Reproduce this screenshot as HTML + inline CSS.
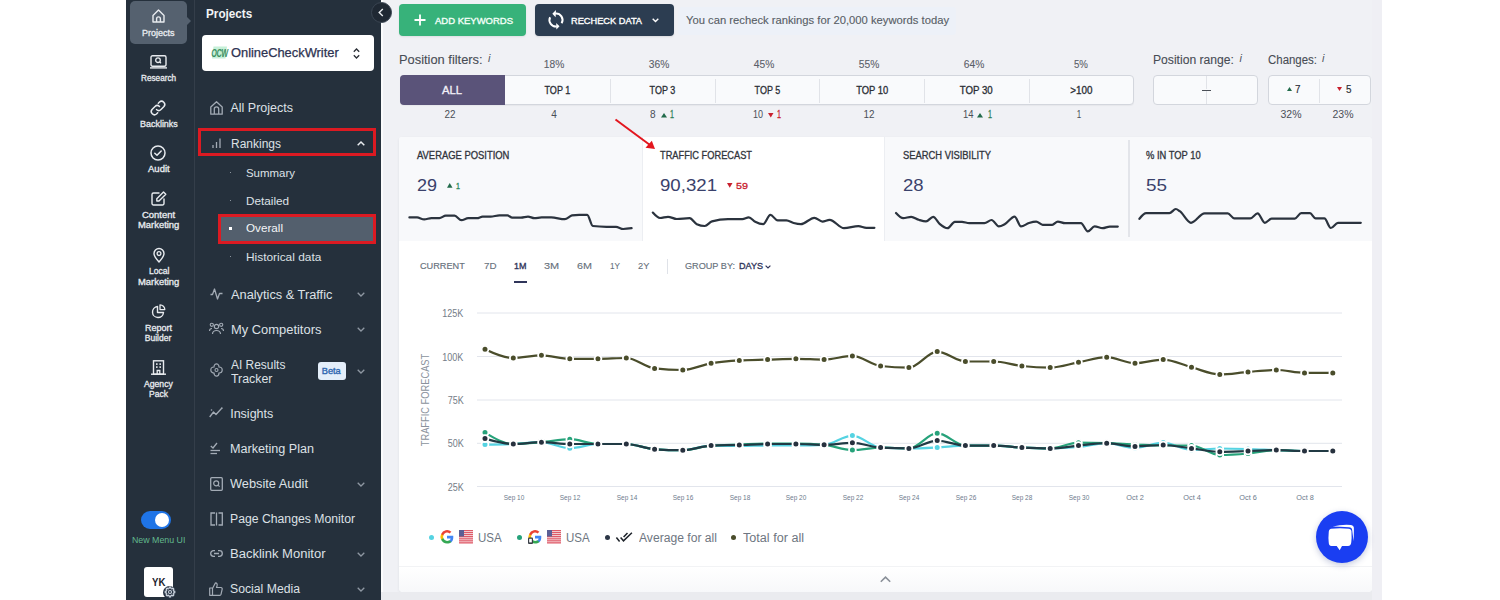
<!DOCTYPE html>
<html><head><meta charset="utf-8"><style>
html,body{margin:0;padding:0;width:1500px;height:600px;overflow:hidden;background:#fff;font-family:'Liberation Sans', sans-serif;}
#root{position:relative;width:1500px;height:600px;overflow:hidden;}
</style></head><body><div id="root">
<div style="position:absolute;left:126px;top:0px;width:255px;height:600px;background:#25303c;"></div>
<div style="position:absolute;left:194px;top:0px;width:1px;height:600px;background:#343e4a;"></div>
<div style="position:absolute;left:381px;top:0px;width:1001px;height:600px;background:#f0f1f5;"></div>
<div style="position:absolute;left:130px;top:1px;width:57px;height:43px;background:#55616f;border-radius:5px;"></div>
<div style="position:absolute;left:186px;top:16px;width:0;height:0;border-top:5px solid transparent;border-bottom:5px solid transparent;border-left:5px solid #55616f;"></div>
<svg style="position:absolute;left:152px;top:9px;overflow:visible" width="13" height="14" viewBox="0 0 13 14" fill="none"><path d="M1 6.5 L6.5 1 L12 6.5 V13 H1 Z" stroke="#e8ebef" stroke-width="1.4" stroke-linejoin="round"/><path d="M4.6 13 V9.8 a1.9 1.9 0 0 1 3.8 0 V13" stroke="#e8ebef" stroke-width="1.4"/></svg>
<div style="position:absolute;left:142.00px;top:28.67px;font-size:8.5px;line-height:8.5px;font-weight:400;color:#e8ebef;white-space:nowrap;letter-spacing:0px;transform:scaleX(1.0612);transform-origin:0 0;-webkit-text-stroke:0.3px #e8ebef;">Projects</div>
<svg style="position:absolute;left:150px;top:55px;overflow:visible" width="17" height="14" viewBox="0 0 17 14" fill="none"><rect x="1" y="0.7" width="15" height="10.6" rx="1.5" stroke="#e8ebef" stroke-width="1.4"/><line x1="0" y1="12.9" x2="17" y2="12.9" stroke="#e8ebef" stroke-width="1.4"/><circle cx="8" cy="5.2" r="2.3" stroke="#e8ebef" stroke-width="1.3"/><line x1="9.7" y1="6.9" x2="11" y2="8.2" stroke="#e8ebef" stroke-width="1.3"/></svg>
<div style="position:absolute;left:141.00px;top:74.08px;font-size:8.5px;line-height:8.5px;font-weight:400;color:#e8ebef;white-space:nowrap;letter-spacing:0px;transform:scaleX(0.9645);transform-origin:0 0;-webkit-text-stroke:0.3px #e8ebef;">Research</div>
<svg style="position:absolute;left:150px;top:100px;overflow:visible" width="16" height="16" viewBox="0 0 16 16" fill="none"><path d="M6.5 9.5 a3.2 3.2 0 0 0 4.5 0 l3 -3 a3.2 3.2 0 0 0 -4.5 -4.5 l-1.2 1.2" stroke="#e8ebef" stroke-width="1.5" stroke-linecap="round"/><path d="M9.5 6.5 a3.2 3.2 0 0 0 -4.5 0 l-3 3 a3.2 3.2 0 0 0 4.5 4.5 l1.2 -1.2" stroke="#e8ebef" stroke-width="1.5" stroke-linecap="round"/></svg>
<div style="position:absolute;left:139.50px;top:119.88px;font-size:8.5px;line-height:8.5px;font-weight:400;color:#e8ebef;white-space:nowrap;letter-spacing:0px;transform:scaleX(1.0527);transform-origin:0 0;-webkit-text-stroke:0.3px #e8ebef;">Backlinks</div>
<svg style="position:absolute;left:150px;top:145px;overflow:visible" width="16" height="16" viewBox="0 0 16 16" fill="none"><circle cx="8" cy="8" r="7" stroke="#e8ebef" stroke-width="1.5"/><path d="M4.8 8.2 L7 10.3 L11.2 6" stroke="#e8ebef" stroke-width="1.5" stroke-linecap="round" stroke-linejoin="round"/></svg>
<div style="position:absolute;left:147.50px;top:164.97px;font-size:8.5px;line-height:8.5px;font-weight:400;color:#e8ebef;white-space:nowrap;letter-spacing:0px;transform:scaleX(1.1200);transform-origin:0 0;-webkit-text-stroke:0.3px #e8ebef;">Audit</div>
<svg style="position:absolute;left:150.5px;top:191px;overflow:visible" width="16" height="15" viewBox="0 0 16 15" fill="none"><path d="M8 2 H2.5 a1.5 1.5 0 0 0 -1.5 1.5 V12.5 a1.5 1.5 0 0 0 1.5 1.5 H11.5 a1.5 1.5 0 0 0 1.5 -1.5 V8" stroke="#e8ebef" stroke-width="1.4" stroke-linecap="round"/><path d="M12.5 1 L14.8 3.3 L8 10 H5.8 V7.8 Z" stroke="#e8ebef" stroke-width="1.4" stroke-linejoin="round"/></svg>
<div style="position:absolute;left:142.10px;top:210.78px;font-size:8.5px;line-height:8.5px;font-weight:400;color:#e8ebef;white-space:nowrap;letter-spacing:0px;transform:scaleX(1.1114);transform-origin:0 0;-webkit-text-stroke:0.3px #e8ebef;">Content</div>
<div style="position:absolute;left:137.90px;top:221.28px;font-size:8.5px;line-height:8.5px;font-weight:400;color:#e8ebef;white-space:nowrap;letter-spacing:0px;transform:scaleX(1.1064);transform-origin:0 0;-webkit-text-stroke:0.3px #e8ebef;">Marketing</div>
<svg style="position:absolute;left:152.5px;top:248px;overflow:visible" width="12" height="15" viewBox="0 0 12 15" fill="none"><path d="M6 14 C2 9.5 1 7.5 1 5.5 a5 5 0 0 1 10 0 c0 2 -1 4 -5 8.5 Z" stroke="#e8ebef" stroke-width="1.4" stroke-linejoin="round"/><circle cx="6" cy="5.6" r="1.9" stroke="#e8ebef" stroke-width="1.3"/></svg>
<div style="position:absolute;left:148.50px;top:267.27px;font-size:8.5px;line-height:8.5px;font-weight:400;color:#e8ebef;white-space:nowrap;letter-spacing:0px;transform:scaleX(1.0085);transform-origin:0 0;-webkit-text-stroke:0.3px #e8ebef;">Local</div>
<div style="position:absolute;left:137.90px;top:277.77px;font-size:8.5px;line-height:8.5px;font-weight:400;color:#e8ebef;white-space:nowrap;letter-spacing:0px;transform:scaleX(1.1064);transform-origin:0 0;-webkit-text-stroke:0.3px #e8ebef;">Marketing</div>
<svg style="position:absolute;left:150.5px;top:304px;overflow:visible" width="15" height="14" viewBox="0 0 15 14" fill="none"><path d="M6.5 2.5 a5.5 5.5 0 1 0 6 6 H6.5 Z" stroke="#e8ebef" stroke-width="1.4" stroke-linejoin="round"/><path d="M9 0.8 a4.8 4.8 0 0 1 4.8 4.8 H9 Z" stroke="#e8ebef" stroke-width="1.3" stroke-linejoin="round"/></svg>
<div style="position:absolute;left:144.75px;top:323.57px;font-size:8.5px;line-height:8.5px;font-weight:400;color:#e8ebef;white-space:nowrap;letter-spacing:0px;transform:scaleX(1.0582);transform-origin:0 0;-webkit-text-stroke:0.3px #e8ebef;">Report</div>
<div style="position:absolute;left:144.75px;top:333.57px;font-size:8.5px;line-height:8.5px;font-weight:400;color:#e8ebef;white-space:nowrap;letter-spacing:0px;-webkit-text-stroke:0.3px #e8ebef;">Builder</div>
<svg style="position:absolute;left:151px;top:360px;overflow:visible" width="15" height="15" viewBox="0 0 15 15" fill="none"><rect x="2.5" y="0.8" width="10" height="13.4" stroke="#e8ebef" stroke-width="1.4"/><line x1="0" y1="14.2" x2="15" y2="14.2" stroke="#e8ebef" stroke-width="1.4"/><rect x="5" y="3.3" width="1.6" height="1.6" fill="#e8ebef"/><rect x="8.4" y="3.3" width="1.6" height="1.6" fill="#e8ebef"/><rect x="5" y="6.3" width="1.6" height="1.6" fill="#e8ebef"/><rect x="8.4" y="6.3" width="1.6" height="1.6" fill="#e8ebef"/><path d="M6.2 14 V10.5 H8.8 V14" stroke="#e8ebef" stroke-width="1.3"/></svg>
<div style="position:absolute;left:144.00px;top:380.07px;font-size:8.5px;line-height:8.5px;font-weight:400;color:#e8ebef;white-space:nowrap;letter-spacing:0px;transform:scaleX(1.0155);transform-origin:0 0;-webkit-text-stroke:0.3px #e8ebef;">Agency</div>
<div style="position:absolute;left:149.00px;top:389.57px;font-size:8.5px;line-height:8.5px;font-weight:400;color:#e8ebef;white-space:nowrap;letter-spacing:0px;-webkit-text-stroke:0.3px #e8ebef;">Pack</div>
<div style="position:absolute;left:141px;top:511px;width:30px;height:18px;background:#1f74e6;border-radius:9px;"></div>
<div style="position:absolute;left:155px;top:513px;width:14px;height:14px;border-radius:50%;background:#fff;"></div>
<div style="position:absolute;left:131.80px;top:536.46px;font-size:8.4px;line-height:8.4px;font-weight:400;color:#62b98e;white-space:nowrap;letter-spacing:0px;transform:scaleX(1.0525);transform-origin:0 0;">New Menu UI</div>
<div style="position:absolute;left:143.5px;top:566.5px;width:29.5px;height:30px;background:#fff;border-radius:3px;"></div>
<div style="position:absolute;left:151.80px;top:576.88px;font-size:10.5px;line-height:10.5px;font-weight:700;color:#1c232c;white-space:nowrap;letter-spacing:0px;transform:scaleX(0.9182);transform-origin:0 0;">YK</div>
<div style="position:absolute;left:163px;top:585.7px;width:13.4px;height:13.4px;border-radius:50%;background:#243040;"></div>
<svg style="position:absolute;left:162.7px;top:585.3px;overflow:visible" width="14" height="14" viewBox="0 0 14 14" fill="none"><path d="M11.83 6.17 L11.83 7.83 L10.61 7.82 L10.13 8.97 L11.00 9.83 L9.83 11.00 L8.97 10.13 L7.82 10.61 L7.83 11.83 L6.17 11.83 L6.18 10.61 L5.03 10.13 L4.17 11.00 L3.00 9.83 L3.87 8.97 L3.39 7.82 L2.17 7.83 L2.17 6.17 L3.39 6.18 L3.87 5.03 L3.00 4.17 L4.17 3.00 L5.03 3.87 L6.18 3.39 L6.17 2.17 L7.83 2.17 L7.82 3.39 L8.97 3.87 L9.83 3.00 L11.00 4.17 L10.13 5.03 L10.61 6.18 Z" stroke="#cdd5df" stroke-width="1.1" fill="none" stroke-linejoin="round"/><circle cx="7" cy="7" r="1.5" stroke="#cdd5df" stroke-width="1.1"/></svg>
<div style="position:absolute;left:205.70px;top:6.55px;font-size:13px;line-height:13px;font-weight:700;color:#f2f4f6;white-space:nowrap;letter-spacing:0px;transform:scaleX(0.9023);transform-origin:0 0;">Projects</div>
<div style="position:absolute;left:202px;top:35px;width:172px;height:35.5px;background:#fff;border-radius:4px;"></div>
<svg style="position:absolute;left:212px;top:46px;overflow:visible" width="15" height="13" viewBox="0 0 15 13" fill="none"><path d="M1.5 0.5 H15 L13.5 12.5 H0 Z" fill="#c6f0d8"/><g transform="translate(7.2 11.2) scale(0.62 1) skewX(-10)"><text x="0" y="0" font-family="Liberation Sans" font-weight="700" font-size="11.5" fill="#3c8f62" text-anchor="middle" letter-spacing="-0.6">OCW</text></g></svg>
<div style="position:absolute;left:231.30px;top:47.00px;font-size:12px;line-height:12px;font-weight:400;color:#2e3352;white-space:nowrap;letter-spacing:0px;transform:scaleX(1.0718);transform-origin:0 0;-webkit-text-stroke:0.25px #2e3352;">OnlineCheckWriter</div>
<svg style="position:absolute;left:353px;top:47.5px;overflow:visible" width="7" height="11" viewBox="0 0 7 11" fill="none"><path d="M0.8 3.8 L3.5 1 L6.2 3.8" stroke="#2b2f36" stroke-width="1.3" fill="none"/><path d="M0.8 7.2 L3.5 10 L6.2 7.2" stroke="#2b2f36" stroke-width="1.3" fill="none"/></svg>
<svg style="position:absolute;left:209.5px;top:100.5px;overflow:visible" width="13" height="14" viewBox="0 0 13 14" fill="none"><path d="M0.8 6 L6.5 0.8 L12.2 6 V13.2 H0.8 Z" stroke="#a3abb5" stroke-width="1.3" stroke-linejoin="round"/><path d="M4.3 13 V8 a2.2 2.2 0 0 1 4.4 0 V13" stroke="#a3abb5" stroke-width="1.3"/></svg>
<div style="position:absolute;left:230.50px;top:101.58px;font-size:12.5px;line-height:12.5px;font-weight:400;color:#dde1e6;white-space:nowrap;letter-spacing:0px;">All Projects</div>
<div style="position:absolute;left:197.5px;top:128px;width:178.5px;height:28px;box-sizing:border-box;border:3px solid #dc1a22;"></div>
<svg style="position:absolute;left:211.5px;top:137.5px;overflow:visible" width="9" height="10" viewBox="0 0 9 10" fill="none"><line x1="1" y1="7" x2="1" y2="10" stroke="#a3abb5" stroke-width="1.3"/><line x1="4.5" y1="4" x2="4.5" y2="10" stroke="#a3abb5" stroke-width="1.3"/><line x1="8" y1="0.5" x2="8" y2="10" stroke="#a3abb5" stroke-width="1.3"/></svg>
<div style="position:absolute;left:230.50px;top:137.68px;font-size:12.5px;line-height:12.5px;font-weight:400;color:#dde1e6;white-space:nowrap;letter-spacing:0px;transform:scaleX(0.9592);transform-origin:0 0;">Rankings</div>
<svg style="position:absolute;left:356.5px;top:140.5px;overflow:visible" width="8" height="5" viewBox="0 0 8 5" fill="none"><path d="M0.7 4.3 L4 1 L7.3 4.3" stroke="#e8ebef" stroke-width="1.5" fill="none"/></svg>
<div style="position:absolute;left:230px;top:172.0px;width:1.3px;height:1.3px;background:#8b949e;"></div>
<div style="position:absolute;left:245.80px;top:167.92px;font-size:11.5px;line-height:11.5px;font-weight:400;color:#dde1e6;white-space:nowrap;letter-spacing:0px;transform:scaleX(0.9938);transform-origin:0 0;">Summary</div>
<div style="position:absolute;left:230px;top:199.8px;width:1.3px;height:1.3px;background:#8b949e;"></div>
<div style="position:absolute;left:245.80px;top:195.72px;font-size:11.5px;line-height:11.5px;font-weight:400;color:#dde1e6;white-space:nowrap;letter-spacing:0px;transform:scaleX(1.0213);transform-origin:0 0;">Detailed</div>
<div style="position:absolute;left:230px;top:256.0px;width:1.3px;height:1.3px;background:#8b949e;"></div>
<div style="position:absolute;left:245.80px;top:251.92px;font-size:11.5px;line-height:11.5px;font-weight:400;color:#dde1e6;white-space:nowrap;letter-spacing:0px;transform:scaleX(1.0333);transform-origin:0 0;">Historical data</div>
<div style="position:absolute;left:218px;top:214.3px;width:158px;height:30.2px;box-sizing:border-box;border:3.5px solid #dc1a22;background:#535f6d;"></div>
<div style="position:absolute;left:229px;top:227px;width:3.2px;height:3.2px;background:#fff;"></div>
<div style="position:absolute;left:245.80px;top:223.42px;font-size:11.5px;line-height:11.5px;font-weight:400;color:#f4f6f8;white-space:nowrap;letter-spacing:0px;transform:scaleX(1.0154);transform-origin:0 0;">Overall</div>
<svg style="position:absolute;left:209.5px;top:288px;overflow:visible" width="13" height="12" viewBox="0 0 13 12" fill="none"><path d="M0.5 6.5 H2.5 L4.5 1 L7.5 11 L9.5 5.5 H12.5" stroke="#a3abb5" stroke-width="1.3" fill="none" stroke-linejoin="round"/></svg>
<div style="position:absolute;left:230.60px;top:288.88px;font-size:12.5px;line-height:12.5px;font-weight:400;color:#dde1e6;white-space:nowrap;letter-spacing:0px;transform:scaleX(1.0231);transform-origin:0 0;">Analytics &amp; Traffic</div>
<svg style="position:absolute;left:356.5px;top:292px;overflow:visible" width="8" height="5" viewBox="0 0 8 5" fill="none"><path d="M0.7 0.7 L4 4 L7.3 0.7" stroke="#8e97a2" stroke-width="1.3" fill="none"/></svg>
<svg style="position:absolute;left:209px;top:322px;overflow:visible" width="15" height="13" viewBox="0 0 15 13" fill="none"><circle cx="7.5" cy="4.5" r="2.2" stroke="#a3abb5" stroke-width="1.2"/><path d="M3.5 12 a4 3.5 0 0 1 8 0" stroke="#a3abb5" stroke-width="1.2"/><circle cx="2.8" cy="2.8" r="1.6" stroke="#a3abb5" stroke-width="1.1"/><circle cx="12.2" cy="2.8" r="1.6" stroke="#a3abb5" stroke-width="1.1"/><path d="M0.5 9 a2.5 2.5 0 0 1 2.5 -2.5" stroke="#a3abb5" stroke-width="1.1"/><path d="M14.5 9 a2.5 2.5 0 0 0 -2.5 -2.5" stroke="#a3abb5" stroke-width="1.1"/></svg>
<div style="position:absolute;left:230.60px;top:324.38px;font-size:12.5px;line-height:12.5px;font-weight:400;color:#dde1e6;white-space:nowrap;letter-spacing:0px;transform:scaleX(1.0328);transform-origin:0 0;">My Competitors</div>
<svg style="position:absolute;left:356.5px;top:327px;overflow:visible" width="8" height="5" viewBox="0 0 8 5" fill="none"><path d="M0.7 0.7 L4 4 L7.3 0.7" stroke="#8e97a2" stroke-width="1.3" fill="none"/></svg>
<svg style="position:absolute;left:209.5px;top:363px;overflow:visible" width="13" height="14" viewBox="0 0 13 14" fill="none"><path d="M6.5 0.8 C9 0.8 9 4 9 4 C9 4 12.2 4 12.2 7 C12.2 10 9 10 9 10 C9 10 9 13.2 6.5 13.2 C4 13.2 4 10 4 10 C4 10 0.8 10 0.8 7 C0.8 4 4 4 4 4 C4 4 4 0.8 6.5 0.8 Z" stroke="#a3abb5" stroke-width="1.2"/><circle cx="6.5" cy="7" r="1.5" stroke="#a3abb5" stroke-width="1.1"/></svg>
<div style="position:absolute;left:230.60px;top:359.07px;font-size:12.5px;line-height:12.5px;font-weight:400;color:#dde1e6;white-space:nowrap;letter-spacing:0px;transform:scaleX(0.9549);transform-origin:0 0;">AI Results</div>
<div style="position:absolute;left:230.60px;top:372.98px;font-size:12.5px;line-height:12.5px;font-weight:400;color:#dde1e6;white-space:nowrap;letter-spacing:0px;transform:scaleX(0.9879);transform-origin:0 0;">Tracker</div>
<div style="position:absolute;left:317.5px;top:362px;width:28.5px;height:17.5px;background:#e4eefa;border-radius:3px;"></div>
<div style="position:absolute;left:322.49px;top:366.85px;font-size:9px;line-height:9px;font-weight:400;color:#2e67b1;white-space:nowrap;letter-spacing:0px;transform:scaleX(1.0262);transform-origin:50% 0;-webkit-text-stroke:0.35px #2e67b1;">Beta</div>
<svg style="position:absolute;left:356.5px;top:369px;overflow:visible" width="8" height="5" viewBox="0 0 8 5" fill="none"><path d="M0.7 0.7 L4 4 L7.3 0.7" stroke="#8e97a2" stroke-width="1.3" fill="none"/></svg>
<svg style="position:absolute;left:209px;top:407px;overflow:visible" width="14" height="11" viewBox="0 0 14 11" fill="none"><path d="M0.7 10 L4.5 5 L7 7.5 L12.5 1.5" stroke="#a3abb5" stroke-width="1.3" fill="none" stroke-linejoin="round"/><circle cx="12.8" cy="1.2" r="0.9" fill="#a3abb5"/><circle cx="2.5" cy="3" r="0.8" fill="#a3abb5"/></svg>
<div style="position:absolute;left:230.20px;top:407.98px;font-size:12.5px;line-height:12.5px;font-weight:400;color:#dde1e6;white-space:nowrap;letter-spacing:0px;">Insights</div>
<svg style="position:absolute;left:210px;top:441px;overflow:visible" width="11" height="14" viewBox="0 0 11 14" fill="none"><path d="M0.8 5 L3 7 L7 2" stroke="#a3abb5" stroke-width="1.3" fill="none"/><line x1="0.5" y1="9.5" x2="10" y2="9.5" stroke="#a3abb5" stroke-width="1.3"/><line x1="0.5" y1="12.5" x2="7" y2="12.5" stroke="#a3abb5" stroke-width="1.3"/></svg>
<div style="position:absolute;left:230.20px;top:442.68px;font-size:12.5px;line-height:12.5px;font-weight:400;color:#dde1e6;white-space:nowrap;letter-spacing:0px;transform:scaleX(1.0075);transform-origin:0 0;">Marketing Plan</div>
<svg style="position:absolute;left:209.5px;top:477px;overflow:visible" width="13" height="14" viewBox="0 0 13 14" fill="none"><rect x="0.7" y="0.7" width="11.6" height="12.6" rx="1" stroke="#a3abb5" stroke-width="1.3"/><circle cx="6.2" cy="6.3" r="2.5" stroke="#a3abb5" stroke-width="1.2"/><line x1="8" y1="8.1" x2="9.6" y2="9.7" stroke="#a3abb5" stroke-width="1.2"/></svg>
<div style="position:absolute;left:230.20px;top:477.57px;font-size:12.5px;line-height:12.5px;font-weight:400;color:#dde1e6;white-space:nowrap;letter-spacing:0px;transform:scaleX(1.0236);transform-origin:0 0;">Website Audit</div>
<svg style="position:absolute;left:356.5px;top:481.5px;overflow:visible" width="8" height="5" viewBox="0 0 8 5" fill="none"><path d="M0.7 0.7 L4 4 L7.3 0.7" stroke="#8e97a2" stroke-width="1.3" fill="none"/></svg>
<svg style="position:absolute;left:209.5px;top:512px;overflow:visible" width="13" height="14" viewBox="0 0 13 14" fill="none"><path d="M6.5 0.5 V13.5" stroke="#a3abb5" stroke-width="1.3"/><path d="M5 1 H1 V13 H5" stroke="#a3abb5" stroke-width="1.3" fill="none"/><path d="M8.5 1 H12.3 V13 H8.5" stroke="#a3abb5" stroke-width="1.3" fill="none"/></svg>
<div style="position:absolute;left:230.30px;top:513.17px;font-size:12.5px;line-height:12.5px;font-weight:400;color:#dde1e6;white-space:nowrap;letter-spacing:0px;transform:scaleX(0.9776);transform-origin:0 0;">Page Changes Monitor</div>
<svg style="position:absolute;left:209.5px;top:550px;overflow:visible" width="13" height="7" viewBox="0 0 13 7" fill="none"><path d="M5 0.7 H3.5 a2.8 2.8 0 0 0 0 5.6 H5 M8 0.7 H9.5 a2.8 2.8 0 0 1 0 5.6 H8 M4 3.5 H9" stroke="#a3abb5" stroke-width="1.3" fill="none"/></svg>
<div style="position:absolute;left:230.30px;top:548.17px;font-size:12.5px;line-height:12.5px;font-weight:400;color:#dde1e6;white-space:nowrap;letter-spacing:0px;transform:scaleX(1.0414);transform-origin:0 0;">Backlink Monitor</div>
<svg style="position:absolute;left:356.5px;top:551.5px;overflow:visible" width="8" height="5" viewBox="0 0 8 5" fill="none"><path d="M0.7 0.7 L4 4 L7.3 0.7" stroke="#8e97a2" stroke-width="1.3" fill="none"/></svg>
<svg style="position:absolute;left:209px;top:582px;overflow:visible" width="14" height="14" viewBox="0 0 14 14" fill="none"><path d="M0.7 6 H3.5 V13.3 H0.7 Z M3.5 6.5 L6.5 0.8 C8 0.8 8.5 2 8 4 L7.5 5.5 H12 a1.3 1.3 0 0 1 1.2 1.6 L12 12.3 a1.3 1.3 0 0 1 -1.3 1 H3.5" stroke="#a3abb5" stroke-width="1.2" fill="none" stroke-linejoin="round"/></svg>
<div style="position:absolute;left:230.30px;top:583.17px;font-size:12.5px;line-height:12.5px;font-weight:400;color:#dde1e6;white-space:nowrap;letter-spacing:0px;transform:scaleX(0.9780);transform-origin:0 0;">Social Media</div>
<svg style="position:absolute;left:356.5px;top:586.5px;overflow:visible" width="8" height="5" viewBox="0 0 8 5" fill="none"><path d="M0.7 0.7 L4 4 L7.3 0.7" stroke="#8e97a2" stroke-width="1.3" fill="none"/></svg>
<div style="position:absolute;left:381px;top:0px;width:1.5px;height:600px;background:#fafbfc;"></div>
<div style="position:absolute;left:399px;top:4px;width:127px;height:32px;background:#37b27a;border-radius:4px;box-shadow:0 1px 2px rgba(0,0,0,0.08);"></div>
<svg style="position:absolute;left:414px;top:14px;overflow:visible" width="12" height="12" viewBox="0 0 12 12" fill="none"><path d="M6 0.5 V11.5 M0.5 6 H11.5" stroke="#fff" stroke-width="1.8"/></svg>
<div style="position:absolute;left:435.00px;top:16.01px;font-size:9.4px;line-height:9.4px;font-weight:400;color:#f4fff8;white-space:nowrap;letter-spacing:0px;transform:scaleX(1.0118);transform-origin:0 0;-webkit-text-stroke:0.35px #f4fff8;">ADD KEYWORDS</div>
<div style="position:absolute;left:535px;top:4px;width:139px;height:32px;background:#2c3d51;border-radius:4px;box-shadow:0 1px 2px rgba(0,0,0,0.1);"></div>
<svg style="position:absolute;left:548px;top:9px;overflow:visible" width="16" height="21" viewBox="0 0 16 21" fill="none"><path d="M7.2 4.5 A6.5 6.5 0 0 1 13.6 14.25" stroke="#fff" stroke-width="2" fill="none"/><path d="M4.3 4.7 L8 1 L7.6 8.3 Z" fill="#fff"/><path d="M2.1 8.25 A6.5 6.5 0 0 0 8.8 17.5" stroke="#fff" stroke-width="2" fill="none"/><path d="M11.5 17.3 L8.2 14 L8.4 20.5 Z" fill="#fff"/></svg>
<div style="position:absolute;left:571.00px;top:16.01px;font-size:9.4px;line-height:9.4px;font-weight:400;color:#fff;white-space:nowrap;letter-spacing:0px;transform:scaleX(0.9853);transform-origin:0 0;-webkit-text-stroke:0.35px #fff;">RECHECK DATA</div>
<svg style="position:absolute;left:651.5px;top:18px;overflow:visible" width="7" height="5" viewBox="0 0 7 5" fill="none"><path d="M0.7 0.7 L3.5 3.5 L6.3 0.7" stroke="#fff" stroke-width="1.4" fill="none"/></svg>
<div style="position:absolute;left:678px;top:7px;width:278px;height:28px;background:#edf1f8;border-radius:3px;"></div>
<div style="position:absolute;left:686.00px;top:15.45px;font-size:11px;line-height:11px;font-weight:400;color:#585e66;white-space:nowrap;letter-spacing:0px;transform:scaleX(1.0208);transform-origin:0 0;-webkit-text-stroke:0.12px #585e66;">You can recheck rankings for 20,000 keywords today</div>
<div style="position:absolute;left:399.40px;top:53.88px;font-size:12.5px;line-height:12.5px;font-weight:400;color:#474c54;white-space:nowrap;letter-spacing:0px;transform:scaleX(1.0285);transform-origin:0 0;-webkit-text-stroke:0.1px #474c54;">Position filters:</div>
<div style="position:absolute;left:488.00px;top:53.15px;font-size:11px;line-height:11px;font-weight:400;color:#50555d;white-space:nowrap;letter-spacing:0px;font-style:italic;">i</div>
<div style="position:absolute;left:400px;top:74.5px;width:734px;height:30px;background:#f9fafc;border:1px solid #d3d6dd;border-radius:4px;box-sizing:border-box;box-shadow:0 1px 1px rgba(0,0,0,0.04);"></div>
<div style="position:absolute;left:400px;top:74.5px;width:105px;height:30px;background:#5a5379;border-radius:4px 0 0 4px;"></div>
<div style="position:absolute;left:609.72px;top:79px;width:1px;height:24px;background:#e1e3e8;"></div>
<div style="position:absolute;left:714.5799999999999px;top:79px;width:1px;height:24px;background:#e1e3e8;"></div>
<div style="position:absolute;left:819.44px;top:79px;width:1px;height:24px;background:#e1e3e8;"></div>
<div style="position:absolute;left:924.3px;top:79px;width:1px;height:24px;background:#e1e3e8;"></div>
<div style="position:absolute;left:1029.1599999999999px;top:79px;width:1px;height:24px;background:#e1e3e8;"></div>
<div style="position:absolute;left:443.42px;top:85.92px;font-size:10.1px;line-height:10.1px;font-weight:400;color:#f2f0f8;white-space:nowrap;letter-spacing:0px;transform:scaleX(1.1130);transform-origin:50% 0;-webkit-text-stroke:0.3px #f2f0f8;">ALL</div>
<div style="position:absolute;left:542.85px;top:85.92px;font-size:10.1px;line-height:10.1px;font-weight:400;color:#2a2e35;white-space:nowrap;letter-spacing:0px;transform:scaleX(0.8954);transform-origin:50% 0;-webkit-text-stroke:0.3px #2a2e35;">TOP 1</div>
<div style="position:absolute;left:543.24px;top:59.05px;font-size:11px;line-height:11px;font-weight:400;color:#5a6069;white-space:nowrap;letter-spacing:0px;transform:scaleX(0.9305);transform-origin:50% 0;-webkit-text-stroke:0.1px #5a6069;">18%</div>
<div style="position:absolute;left:647.71px;top:85.92px;font-size:10.1px;line-height:10.1px;font-weight:400;color:#2a2e35;white-space:nowrap;letter-spacing:0px;transform:scaleX(0.8885);transform-origin:50% 0;-webkit-text-stroke:0.3px #2a2e35;">TOP 3</div>
<div style="position:absolute;left:648.10px;top:59.05px;font-size:11px;line-height:11px;font-weight:400;color:#5a6069;white-space:nowrap;letter-spacing:0px;transform:scaleX(0.9305);transform-origin:50% 0;-webkit-text-stroke:0.1px #5a6069;">36%</div>
<div style="position:absolute;left:752.57px;top:85.92px;font-size:10.1px;line-height:10.1px;font-weight:400;color:#2a2e35;white-space:nowrap;letter-spacing:0px;transform:scaleX(0.8885);transform-origin:50% 0;-webkit-text-stroke:0.3px #2a2e35;">TOP 5</div>
<div style="position:absolute;left:752.96px;top:59.05px;font-size:11px;line-height:11px;font-weight:400;color:#5a6069;white-space:nowrap;letter-spacing:0px;transform:scaleX(0.9305);transform-origin:50% 0;-webkit-text-stroke:0.1px #5a6069;">45%</div>
<div style="position:absolute;left:854.63px;top:85.92px;font-size:10.1px;line-height:10.1px;font-weight:400;color:#2a2e35;white-space:nowrap;letter-spacing:0px;transform:scaleX(0.9296);transform-origin:50% 0;-webkit-text-stroke:0.3px #2a2e35;">TOP 10</div>
<div style="position:absolute;left:857.82px;top:59.05px;font-size:11px;line-height:11px;font-weight:400;color:#5a6069;white-space:nowrap;letter-spacing:0px;transform:scaleX(0.9305);transform-origin:50% 0;-webkit-text-stroke:0.1px #5a6069;">55%</div>
<div style="position:absolute;left:959.49px;top:85.92px;font-size:10.1px;line-height:10.1px;font-weight:400;color:#2a2e35;white-space:nowrap;letter-spacing:0px;transform:scaleX(0.9587);transform-origin:50% 0;-webkit-text-stroke:0.3px #2a2e35;">TOP 30</div>
<div style="position:absolute;left:962.68px;top:59.05px;font-size:11px;line-height:11px;font-weight:400;color:#5a6069;white-space:nowrap;letter-spacing:0px;transform:scaleX(0.9305);transform-origin:50% 0;-webkit-text-stroke:0.1px #5a6069;">64%</div>
<div style="position:absolute;left:1070.18px;top:85.92px;font-size:10.1px;line-height:10.1px;font-weight:400;color:#2a2e35;white-space:nowrap;letter-spacing:0px;transform:scaleX(0.9758);transform-origin:50% 0;-webkit-text-stroke:0.3px #2a2e35;">&gt;100</div>
<div style="position:absolute;left:1072.61px;top:59.05px;font-size:11px;line-height:11px;font-weight:400;color:#5a6069;white-space:nowrap;letter-spacing:0px;transform:scaleX(0.8802);transform-origin:50% 0;-webkit-text-stroke:0.1px #5a6069;">5%</div>
<div style="position:absolute;left:443.79px;top:109.32px;font-size:10.8px;line-height:10.8px;font-weight:400;color:#4a4f57;white-space:nowrap;letter-spacing:0px;transform:scaleX(0.9155);transform-origin:50% 0;">22</div>
<div style="position:absolute;left:550.99px;top:109.32px;font-size:10.8px;line-height:10.8px;font-weight:400;color:#4a4f57;white-space:nowrap;letter-spacing:0px;transform:scaleX(0.9309);transform-origin:50% 0;">4</div>
<div style="position:absolute;left:650.00px;top:109.32px;font-size:10.8px;line-height:10.8px;font-weight:400;color:#4a4f57;white-space:nowrap;letter-spacing:0px;transform:scaleX(0.9309);transform-origin:0 0;">8</div>
<svg style="position:absolute;left:660.5px;top:112.8px;overflow:visible" width="6" height="4.5" viewBox="0 0 6 4.5" fill="none"><path d="M0 4.5 L3 0 L6 4.5 Z" fill="#226b4b"/></svg>
<div style="position:absolute;left:669.80px;top:109.32px;font-size:10.8px;line-height:10.8px;font-weight:400;color:#2f7d57;white-space:nowrap;letter-spacing:0px;transform:scaleX(0.6649);transform-origin:0 0;-webkit-text-stroke:0.3px #2f7d57;">1</div>
<div style="position:absolute;left:753.00px;top:109.32px;font-size:10.8px;line-height:10.8px;font-weight:400;color:#4a4f57;white-space:nowrap;letter-spacing:0px;transform:scaleX(0.8322);transform-origin:0 0;">10</div>
<svg style="position:absolute;left:768px;top:112.8px;overflow:visible" width="5.5" height="4.5" viewBox="0 0 5.5 4.5" fill="none"><path d="M0 0 L5.5 0 L2.75 4.5 Z" fill="#c8202e"/></svg>
<div style="position:absolute;left:777.00px;top:109.32px;font-size:10.8px;line-height:10.8px;font-weight:400;color:#c8202e;white-space:nowrap;letter-spacing:0px;transform:scaleX(0.6649);transform-origin:0 0;-webkit-text-stroke:0.3px #c8202e;">1</div>
<div style="position:absolute;left:863.29px;top:109.32px;font-size:10.8px;line-height:10.8px;font-weight:400;color:#4a4f57;white-space:nowrap;letter-spacing:0px;transform:scaleX(0.9155);transform-origin:50% 0;">12</div>
<div style="position:absolute;left:962.70px;top:109.32px;font-size:10.8px;line-height:10.8px;font-weight:400;color:#4a4f57;white-space:nowrap;letter-spacing:0px;transform:scaleX(0.8739);transform-origin:0 0;">14</div>
<svg style="position:absolute;left:977px;top:112.8px;overflow:visible" width="6" height="4.5" viewBox="0 0 6 4.5" fill="none"><path d="M0 4.5 L3 0 L6 4.5 Z" fill="#226b4b"/></svg>
<div style="position:absolute;left:987.50px;top:109.32px;font-size:10.8px;line-height:10.8px;font-weight:400;color:#2f7d57;white-space:nowrap;letter-spacing:0px;transform:scaleX(0.6649);transform-origin:0 0;-webkit-text-stroke:0.3px #2f7d57;">1</div>
<div style="position:absolute;left:1076.49px;top:109.32px;font-size:10.8px;line-height:10.8px;font-weight:400;color:#4a4f57;white-space:nowrap;letter-spacing:0px;transform:scaleX(0.7481);transform-origin:50% 0;">1</div>
<div style="position:absolute;left:1153.00px;top:53.88px;font-size:12.5px;line-height:12.5px;font-weight:400;color:#474c54;white-space:nowrap;letter-spacing:0px;transform:scaleX(0.9713);transform-origin:0 0;-webkit-text-stroke:0.1px #474c54;">Position range:</div>
<div style="position:absolute;left:1239.50px;top:53.15px;font-size:11px;line-height:11px;font-weight:400;color:#50555d;white-space:nowrap;letter-spacing:0px;font-style:italic;">i</div>
<div style="position:absolute;left:1153px;top:74.5px;width:105px;height:30px;background:#f9fafc;border:1px solid #d3d6dd;border-radius:4px;box-sizing:border-box;"></div>
<div style="position:absolute;left:1205.5px;top:75.5px;width:1px;height:28px;background:#e1e3e8;"></div>
<div style="position:absolute;left:1201px;top:88.8px;width:9.5px;height:2.5px;background:#f9fafc;"></div>
<div style="position:absolute;left:1201.5px;top:89.5px;width:9px;height:1.2px;background:#4a4f57;"></div>
<div style="position:absolute;left:1268.00px;top:53.88px;font-size:12.5px;line-height:12.5px;font-weight:400;color:#474c54;white-space:nowrap;letter-spacing:0px;transform:scaleX(0.9156);transform-origin:0 0;-webkit-text-stroke:0.1px #474c54;">Changes:</div>
<div style="position:absolute;left:1322.00px;top:53.15px;font-size:11px;line-height:11px;font-weight:400;color:#50555d;white-space:nowrap;letter-spacing:0px;font-style:italic;">i</div>
<div style="position:absolute;left:1268px;top:74.5px;width:103px;height:30px;background:#f9fafc;border:1px solid #d3d6dd;border-radius:4px;box-sizing:border-box;"></div>
<div style="position:absolute;left:1319px;top:78.5px;width:1px;height:24px;background:#e1e3e8;"></div>
<svg style="position:absolute;left:1286.5px;top:87px;overflow:visible" width="5" height="4" viewBox="0 0 5 4" fill="none"><path d="M0 4 L2.5 0 L5 4 Z" fill="#226b4b"/></svg>
<div style="position:absolute;left:1295.00px;top:85.00px;font-size:10px;line-height:10px;font-weight:400;color:#2a2e35;white-space:nowrap;letter-spacing:0px;transform:scaleX(0.9888);transform-origin:0 0;-webkit-text-stroke:0.15px #2a2e35;">7</div>
<svg style="position:absolute;left:1337px;top:87px;overflow:visible" width="5" height="4" viewBox="0 0 5 4" fill="none"><path d="M0 0 L5 0 L2.5 4 Z" fill="#c8202e"/></svg>
<div style="position:absolute;left:1346.00px;top:85.00px;font-size:10px;line-height:10px;font-weight:400;color:#2a2e35;white-space:nowrap;letter-spacing:0px;transform:scaleX(0.9888);transform-origin:0 0;-webkit-text-stroke:0.15px #2a2e35;">5</div>
<div style="position:absolute;left:1280.99px;top:109.90px;font-size:10px;line-height:10px;font-weight:400;color:#4a4f57;white-space:nowrap;letter-spacing:0px;transform:scaleX(1.0492);transform-origin:50% 0;">32%</div>
<div style="position:absolute;left:1332.99px;top:109.90px;font-size:10px;line-height:10px;font-weight:400;color:#4a4f57;white-space:nowrap;letter-spacing:0px;transform:scaleX(1.0492);transform-origin:50% 0;">23%</div>
<div style="position:absolute;left:399px;top:137px;width:972.5px;height:455px;background:#fff;border-radius:4px;box-shadow:0 1px 3px rgba(30,40,60,0.08);"></div>
<div style="position:absolute;left:399px;top:137px;width:242.5px;height:103.5px;background:#f8f9fb;border-radius:2px 0 0 0;"></div>
<div style="position:absolute;left:641.5px;top:137px;width:1px;height:103.5px;background:#eceef2;"></div>
<div style="position:absolute;left:884.5px;top:137px;width:243.5px;height:103.5px;background:#f8f9fb;"></div>
<div style="position:absolute;left:884px;top:137px;width:1px;height:103.5px;background:#eceef2;"></div>
<div style="position:absolute;left:1128px;top:137px;width:243.5px;height:103.5px;background:#f8f9fb;border-radius:0 4px 0 0;"></div>
<div style="position:absolute;left:1128px;top:140px;width:1.5px;height:97px;background:#e3e5ea;"></div>
<div style="position:absolute;left:417.00px;top:150.70px;font-size:10px;line-height:10px;font-weight:400;color:#30343b;white-space:nowrap;letter-spacing:0px;transform:scaleX(0.9412);transform-origin:0 0;-webkit-text-stroke:0.3px #30343b;">AVERAGE POSITION</div>
<div style="position:absolute;left:417.00px;top:176.97px;font-size:16.5px;line-height:16.5px;font-weight:400;color:#3a416b;white-space:nowrap;letter-spacing:0px;transform:scaleX(1.0894);transform-origin:0 0;">29</div>
<svg style="position:absolute;left:447px;top:183.3px;overflow:visible" width="5.5" height="4.7" viewBox="0 0 5.5 4.7" fill="none"><path d="M0 4.7 L2.75 0 L5.5 4.7 Z" fill="#226b4b"/></svg>
<div style="position:absolute;left:456.30px;top:181.14px;font-size:9.6px;line-height:9.6px;font-weight:400;color:#2f8a5b;white-space:nowrap;letter-spacing:0px;transform:scaleX(0.7485);transform-origin:0 0;-webkit-text-stroke:0.35px #2f8a5b;">1</div>
<div style="position:absolute;left:660.00px;top:150.70px;font-size:10px;line-height:10px;font-weight:400;color:#30343b;white-space:nowrap;letter-spacing:0px;transform:scaleX(0.9251);transform-origin:0 0;-webkit-text-stroke:0.3px #30343b;">TRAFFIC FORECAST</div>
<div style="position:absolute;left:660.00px;top:176.97px;font-size:16.5px;line-height:16.5px;font-weight:400;color:#3a416b;white-space:nowrap;letter-spacing:0px;transform:scaleX(1.1294);transform-origin:0 0;">90,321</div>
<svg style="position:absolute;left:727px;top:183.3px;overflow:visible" width="5.5" height="4.7" viewBox="0 0 5.5 4.7" fill="none"><path d="M0 0 L5.5 0 L2.75 4.7 Z" fill="#c8202e"/></svg>
<div style="position:absolute;left:735.60px;top:180.97px;font-size:9.8px;line-height:9.8px;font-weight:400;color:#c8202e;white-space:nowrap;letter-spacing:0px;transform:scaleX(1.1003);transform-origin:0 0;-webkit-text-stroke:0.3px #c8202e;">59</div>
<div style="position:absolute;left:903.00px;top:150.70px;font-size:10px;line-height:10px;font-weight:400;color:#30343b;white-space:nowrap;letter-spacing:0px;transform:scaleX(0.9369);transform-origin:0 0;-webkit-text-stroke:0.3px #30343b;">SEARCH VISIBILITY</div>
<div style="position:absolute;left:903.00px;top:176.97px;font-size:16.5px;line-height:16.5px;font-weight:400;color:#3a416b;white-space:nowrap;letter-spacing:0px;transform:scaleX(1.1220);transform-origin:0 0;">28</div>
<div style="position:absolute;left:1146.00px;top:150.70px;font-size:10px;line-height:10px;font-weight:400;color:#30343b;white-space:nowrap;letter-spacing:0px;transform:scaleX(0.9353);transform-origin:0 0;-webkit-text-stroke:0.3px #30343b;">% IN TOP 10</div>
<div style="position:absolute;left:1146.00px;top:176.97px;font-size:16.5px;line-height:16.5px;font-weight:400;color:#3a416b;white-space:nowrap;letter-spacing:0px;transform:scaleX(1.1438);transform-origin:0 0;">55</div>
<svg style="position:absolute;left:0;top:0" width="1500" height="600" viewBox="0 0 1500 600" fill="none"><path d="M409.40 217.40 C411.93 217.40 414.47 217.40 417.00 217.40 C419.40 217.40 421.80 219.40 424.20 219.40 C426.60 219.40 429.00 218.20 431.40 218.20 C434.07 218.20 436.73 218.20 439.40 218.20 C441.53 218.20 443.67 215.60 445.80 215.60 C448.73 215.60 451.67 215.60 454.60 215.60 C456.87 215.60 459.13 220.20 461.40 220.20 C463.67 220.20 465.93 218.20 468.20 218.20 C471.13 218.20 474.07 218.20 477.00 218.20 C478.87 218.20 480.73 216.60 482.60 216.60 C485.27 216.60 487.93 216.60 490.60 216.60 C493.53 216.60 496.47 215.40 499.40 215.40 C502.07 215.40 504.73 215.40 507.40 215.40 C509.00 215.40 510.60 217.60 512.20 217.60 C515.13 217.60 518.07 217.60 521.00 217.60 C523.33 217.60 525.67 216.60 528.00 216.60 C530.13 216.60 532.27 218.20 534.40 218.20 C536.80 218.20 539.20 217.40 541.60 217.40 C544.80 217.40 548.00 217.40 551.20 217.40 C555.73 217.40 560.27 219.20 564.80 219.20 C567.20 219.20 569.60 215.80 572.00 215.40 C574.40 215.00 576.80 214.80 579.20 214.80 C581.87 214.80 584.53 214.80 587.20 214.80 C589.07 214.80 590.93 225.78 592.80 226.00 C597.33 226.53 601.87 226.80 606.40 226.80 C609.60 226.80 612.80 226.80 616.00 226.80 C618.40 226.80 620.80 229.00 623.20 229.00 C626.00 229.00 628.80 228.60 631.60 228.20" stroke="#2b333e" stroke-width="2.2" stroke-linecap="round" stroke-linejoin="round"/><path d="M652.80 212.60 C655.20 215.30 657.60 218.00 660.00 218.00 C662.67 218.00 665.33 216.80 668.00 216.80 C670.93 216.80 673.87 219.00 676.80 219.00 C681.07 219.00 685.33 218.20 689.60 218.20 C692.00 218.20 694.40 223.12 696.80 224.20 C699.47 225.40 702.13 226.00 704.80 226.00 C707.20 226.00 709.60 222.06 712.00 221.40 C717.33 219.93 722.67 219.20 728.00 219.20 C732.80 219.20 737.60 219.20 742.40 219.20 C744.53 219.20 746.67 217.40 748.80 217.40 C750.93 217.40 753.07 220.70 755.20 221.80 C757.87 223.17 760.53 224.20 763.20 224.20 C765.60 224.20 768.00 214.80 770.40 214.80 C772.80 214.80 775.20 220.40 777.60 220.40 C780.53 220.40 783.47 220.40 786.40 220.40 C788.80 220.40 791.20 222.37 793.60 223.00 C796.00 223.63 798.40 224.20 800.80 224.20 C805.33 224.20 809.87 217.80 814.40 217.80 C817.07 217.80 819.73 221.60 822.40 221.60 C824.80 221.60 827.20 219.80 829.60 219.80 C834.40 219.80 839.20 228.20 844.00 228.20 C848.80 228.20 853.60 226.20 858.40 226.20 C861.07 226.20 863.73 227.80 866.40 227.80 C869.07 227.80 871.73 227.80 874.40 227.80" stroke="#2b333e" stroke-width="2.2" stroke-linecap="round" stroke-linejoin="round"/><path d="M896.00 213.00 C898.40 215.60 900.80 218.20 903.20 218.20 C905.87 218.20 908.53 216.80 911.20 216.80 C913.73 216.80 916.27 219.02 918.80 219.80 C921.20 220.53 923.60 221.40 926.00 221.40 C928.40 221.40 930.80 216.80 933.20 216.80 C935.33 216.80 937.47 221.98 939.60 223.80 C942.27 226.07 944.93 228.20 947.60 228.20 C950.00 228.20 952.40 221.80 954.80 221.80 C957.20 221.80 959.60 221.80 962.00 221.80 C964.40 221.80 966.80 223.20 969.20 223.20 C974.27 223.20 979.33 223.20 984.40 223.20 C986.80 223.20 989.20 220.00 991.60 220.00 C994.00 220.00 996.40 226.40 998.80 226.40 C1000.87 226.40 1002.93 225.11 1005.00 224.00 C1008.20 222.28 1011.40 216.60 1014.60 216.60 C1016.73 216.60 1018.87 226.40 1021.00 226.40 C1023.67 226.40 1026.33 223.81 1029.00 223.00 C1031.40 222.27 1033.80 221.60 1036.20 221.60 C1038.33 221.60 1040.47 224.80 1042.60 224.80 C1045.80 224.80 1049.00 224.80 1052.20 224.80 C1054.07 224.80 1055.93 221.60 1057.80 221.60 C1060.20 221.60 1062.60 223.20 1065.00 223.20 C1070.33 223.20 1075.67 223.20 1081.00 223.20 C1083.27 223.20 1085.53 231.40 1087.80 231.40 C1090.07 231.40 1092.33 226.40 1094.60 226.40 C1097.27 226.40 1099.93 228.20 1102.60 228.20 C1105.00 228.20 1107.40 226.60 1109.80 226.60 C1112.47 226.60 1115.13 226.60 1117.80 226.60" stroke="#2b333e" stroke-width="2.2" stroke-linecap="round" stroke-linejoin="round"/><path d="M1139.40 218.80 C1141.67 216.00 1143.93 213.20 1146.20 213.20 C1153.93 213.20 1161.67 213.20 1169.40 213.20 C1171.53 213.20 1173.67 209.00 1175.80 209.00 C1177.13 209.00 1178.47 210.30 1179.80 211.20 C1183.53 213.73 1187.27 222.80 1191.00 222.80 C1195.53 222.80 1200.07 213.40 1204.60 213.40 C1212.33 213.40 1220.07 213.40 1227.80 213.40 C1229.93 213.40 1232.07 218.40 1234.20 218.40 C1239.53 218.40 1244.87 218.40 1250.20 218.40 C1252.67 218.40 1255.13 213.40 1257.60 213.40 C1260.00 213.40 1262.40 222.80 1264.80 222.80 C1267.07 222.80 1269.33 218.60 1271.60 218.60 C1279.33 218.60 1287.07 218.60 1294.80 218.60 C1296.93 218.60 1299.07 213.20 1301.20 213.20 C1304.13 213.20 1307.07 213.20 1310.00 213.20 C1311.87 213.20 1313.73 218.40 1315.60 218.40 C1318.53 218.40 1321.47 218.40 1324.40 218.40 C1326.53 218.40 1328.67 228.00 1330.80 228.00 C1333.20 228.00 1335.60 222.80 1338.00 222.80 C1345.60 222.80 1353.20 222.80 1360.80 222.80" stroke="#2b333e" stroke-width="2.2" stroke-linecap="round" stroke-linejoin="round"/></svg>
<svg style="position:absolute;left:0;top:0" width="1500" height="600" viewBox="0 0 1500 600" fill="none"><line x1="615.5" y1="119.5" x2="652" y2="146.5" stroke="#e3161e" stroke-width="2"/><path d="M655 149 L645.5 147.8 L651.8 140.8 Z" fill="#e3161e"/></svg>
<div style="position:absolute;left:420.20px;top:261.34px;font-size:9.6px;line-height:9.6px;font-weight:400;color:#66707b;white-space:nowrap;letter-spacing:0px;transform:scaleX(0.9551);transform-origin:0 0;-webkit-text-stroke:0.15px #66707b;">CURRENT</div>
<div style="position:absolute;left:483.50px;top:261.34px;font-size:9.6px;line-height:9.6px;font-weight:400;color:#66707b;white-space:nowrap;letter-spacing:0px;transform:scaleX(1.0191);transform-origin:0 0;-webkit-text-stroke:0.1px #66707b;">7D</div>
<div style="position:absolute;left:514.00px;top:261.34px;font-size:9.6px;line-height:9.6px;font-weight:400;color:#30355a;white-space:nowrap;letter-spacing:0px;transform:scaleX(0.9379);transform-origin:0 0;-webkit-text-stroke:0.35px #30355a;">1M</div>
<div style="position:absolute;left:544.30px;top:261.34px;font-size:9.6px;line-height:9.6px;font-weight:400;color:#66707b;white-space:nowrap;letter-spacing:0px;transform:scaleX(1.1404);transform-origin:0 0;-webkit-text-stroke:0.1px #66707b;">3M</div>
<div style="position:absolute;left:577.00px;top:261.34px;font-size:9.6px;line-height:9.6px;font-weight:400;color:#66707b;white-space:nowrap;letter-spacing:0px;transform:scaleX(1.1254);transform-origin:0 0;-webkit-text-stroke:0.1px #66707b;">6M</div>
<div style="position:absolute;left:610.00px;top:261.34px;font-size:9.6px;line-height:9.6px;font-weight:400;color:#66707b;white-space:nowrap;letter-spacing:0px;transform:scaleX(0.8511);transform-origin:0 0;-webkit-text-stroke:0.1px #66707b;">1Y</div>
<div style="position:absolute;left:638.00px;top:261.34px;font-size:9.6px;line-height:9.6px;font-weight:400;color:#66707b;white-space:nowrap;letter-spacing:0px;transform:scaleX(0.9702);transform-origin:0 0;-webkit-text-stroke:0.1px #66707b;">2Y</div>
<div style="position:absolute;left:514px;top:281px;width:13px;height:2px;background:#30355a;"></div>
<div style="position:absolute;left:667px;top:259px;width:1px;height:15px;background:#dfe2e8;"></div>
<div style="position:absolute;left:685.00px;top:261.34px;font-size:9.6px;line-height:9.6px;font-weight:400;color:#66707b;white-space:nowrap;letter-spacing:0px;transform:scaleX(0.9504);transform-origin:0 0;-webkit-text-stroke:0.15px #66707b;">GROUP BY:</div>
<div style="position:absolute;left:739.40px;top:261.34px;font-size:9.6px;line-height:9.6px;font-weight:400;color:#30355a;white-space:nowrap;letter-spacing:0px;transform:scaleX(0.9441);transform-origin:0 0;-webkit-text-stroke:0.35px #30355a;">DAYS</div>
<svg style="position:absolute;left:765px;top:264.5px;overflow:visible" width="6" height="4" viewBox="0 0 6 4" fill="none"><path d="M0.6 0.6 L3 3 L5.4 0.6" stroke="#30355a" stroke-width="1.2" fill="none"/></svg>
<svg style="position:absolute;left:0;top:0" width="1500" height="600" viewBox="0 0 1500 600" fill="none"><line x1="477" y1="313" x2="1342" y2="313" stroke="#e2e5ec" stroke-width="1"/><line x1="477" y1="356.5" x2="1342" y2="356.5" stroke="#e2e5ec" stroke-width="1"/><line x1="477" y1="400" x2="1342" y2="400" stroke="#e2e5ec" stroke-width="1"/><line x1="477" y1="443.3" x2="1342" y2="443.3" stroke="#e2e5ec" stroke-width="1"/><line x1="477" y1="486.5" x2="1342" y2="486.5" stroke="#e2e5ec" stroke-width="1"/></svg>
<div style="position:absolute;left:439.94px;top:309.00px;font-size:10px;line-height:10px;font-weight:400;color:#747c87;white-space:nowrap;letter-spacing:0px;transform:scaleX(0.8990);transform-origin:100% 0;">125K</div>
<div style="position:absolute;left:439.94px;top:352.50px;font-size:10px;line-height:10px;font-weight:400;color:#747c87;white-space:nowrap;letter-spacing:0px;transform:scaleX(0.8990);transform-origin:100% 0;">100K</div>
<div style="position:absolute;left:445.50px;top:396.00px;font-size:10px;line-height:10px;font-weight:400;color:#747c87;white-space:nowrap;letter-spacing:0px;transform:scaleX(0.8990);transform-origin:100% 0;">75K</div>
<div style="position:absolute;left:445.50px;top:439.30px;font-size:10px;line-height:10px;font-weight:400;color:#747c87;white-space:nowrap;letter-spacing:0px;transform:scaleX(0.8990);transform-origin:100% 0;">50K</div>
<div style="position:absolute;left:445.50px;top:482.50px;font-size:10px;line-height:10px;font-weight:400;color:#747c87;white-space:nowrap;letter-spacing:0px;transform:scaleX(0.8990);transform-origin:100% 0;">25K</div>
<div style="position:absolute;left:426px;top:399.5px;width:0;height:0;"><div style="position:absolute;left:0;top:0;transform:translate(-50%,-50%) rotate(-90deg) scaleX(0.93);white-space:nowrap;font-size:10px;line-height:10px;color:#8a929c;">TRAFFIC FORECAST</div></div>
<div style="position:absolute;left:501.72px;top:493.94px;font-size:7.6px;line-height:7.6px;font-weight:400;color:#6c7a8c;white-space:nowrap;letter-spacing:0px;transform:scaleX(0.8514);transform-origin:50% 0;">Sep 10</div>
<div style="position:absolute;left:558.24px;top:493.94px;font-size:7.6px;line-height:7.6px;font-weight:400;color:#6c7a8c;white-space:nowrap;letter-spacing:0px;transform:scaleX(0.8514);transform-origin:50% 0;">Sep 12</div>
<div style="position:absolute;left:614.76px;top:493.94px;font-size:7.6px;line-height:7.6px;font-weight:400;color:#6c7a8c;white-space:nowrap;letter-spacing:0px;transform:scaleX(0.8514);transform-origin:50% 0;">Sep 14</div>
<div style="position:absolute;left:671.28px;top:493.94px;font-size:7.6px;line-height:7.6px;font-weight:400;color:#6c7a8c;white-space:nowrap;letter-spacing:0px;transform:scaleX(0.8514);transform-origin:50% 0;">Sep 16</div>
<div style="position:absolute;left:727.80px;top:493.94px;font-size:7.6px;line-height:7.6px;font-weight:400;color:#6c7a8c;white-space:nowrap;letter-spacing:0px;transform:scaleX(0.8514);transform-origin:50% 0;">Sep 18</div>
<div style="position:absolute;left:784.32px;top:493.94px;font-size:7.6px;line-height:7.6px;font-weight:400;color:#6c7a8c;white-space:nowrap;letter-spacing:0px;transform:scaleX(0.8514);transform-origin:50% 0;">Sep 20</div>
<div style="position:absolute;left:840.84px;top:493.94px;font-size:7.6px;line-height:7.6px;font-weight:400;color:#6c7a8c;white-space:nowrap;letter-spacing:0px;transform:scaleX(0.8514);transform-origin:50% 0;">Sep 22</div>
<div style="position:absolute;left:897.36px;top:493.94px;font-size:7.6px;line-height:7.6px;font-weight:400;color:#6c7a8c;white-space:nowrap;letter-spacing:0px;transform:scaleX(0.8514);transform-origin:50% 0;">Sep 24</div>
<div style="position:absolute;left:953.88px;top:493.94px;font-size:7.6px;line-height:7.6px;font-weight:400;color:#6c7a8c;white-space:nowrap;letter-spacing:0px;transform:scaleX(0.8514);transform-origin:50% 0;">Sep 26</div>
<div style="position:absolute;left:1010.40px;top:493.94px;font-size:7.6px;line-height:7.6px;font-weight:400;color:#6c7a8c;white-space:nowrap;letter-spacing:0px;transform:scaleX(0.8514);transform-origin:50% 0;">Sep 28</div>
<div style="position:absolute;left:1066.92px;top:493.94px;font-size:7.6px;line-height:7.6px;font-weight:400;color:#6c7a8c;white-space:nowrap;letter-spacing:0px;transform:scaleX(0.8514);transform-origin:50% 0;">Sep 30</div>
<div style="position:absolute;left:1126.40px;top:493.94px;font-size:7.6px;line-height:7.6px;font-weight:400;color:#6c7a8c;white-space:nowrap;letter-spacing:0px;transform:scaleX(0.9639);transform-origin:50% 0;">Oct 2</div>
<div style="position:absolute;left:1182.92px;top:493.94px;font-size:7.6px;line-height:7.6px;font-weight:400;color:#6c7a8c;white-space:nowrap;letter-spacing:0px;transform:scaleX(0.9639);transform-origin:50% 0;">Oct 4</div>
<div style="position:absolute;left:1239.44px;top:493.94px;font-size:7.6px;line-height:7.6px;font-weight:400;color:#6c7a8c;white-space:nowrap;letter-spacing:0px;transform:scaleX(0.9639);transform-origin:50% 0;">Oct 6</div>
<div style="position:absolute;left:1295.96px;top:493.94px;font-size:7.6px;line-height:7.6px;font-weight:400;color:#6c7a8c;white-space:nowrap;letter-spacing:0px;transform:scaleX(0.9639);transform-origin:50% 0;">Oct 8</div>
<svg style="position:absolute;left:0;top:0" width="1500" height="600" viewBox="0 0 1500 600" fill="none"><path d="M485.00 444.60 C494.42 444.50 503.84 444.40 513.26 444.00 C522.68 443.60 532.10 442.20 541.52 442.20 C550.94 442.20 560.36 448.20 569.78 448.20 C579.20 448.20 588.62 444.00 598.04 444.00 C607.46 444.00 616.88 444.00 626.30 444.00 C635.72 444.00 645.14 448.70 654.56 449.30 C663.98 449.90 673.40 450.20 682.82 450.20 C692.24 450.20 701.66 445.60 711.08 445.60 C720.50 445.60 729.92 446.00 739.34 446.00 C748.76 446.00 758.18 445.50 767.60 445.50 C777.02 445.50 786.44 445.50 795.86 445.50 C805.28 445.50 814.70 445.27 824.12 444.80 C833.54 444.33 842.96 435.60 852.38 435.60 C861.80 435.60 871.22 447.07 880.64 447.60 C890.06 448.13 899.48 448.40 908.90 448.40 C918.32 448.40 927.74 447.87 937.16 447.40 C946.58 446.93 956.00 445.60 965.42 445.60 C974.84 445.60 984.26 445.60 993.68 445.60 C1003.10 445.60 1012.52 447.13 1021.94 447.60 C1031.36 448.07 1040.78 448.40 1050.20 448.40 C1059.62 448.40 1069.04 447.87 1078.46 447.00 C1087.88 446.13 1097.30 443.20 1106.72 443.20 C1116.14 443.20 1125.56 448.00 1134.98 448.00 C1144.40 448.00 1153.82 442.50 1163.24 442.50 C1172.66 442.50 1182.08 450.00 1191.50 450.00 C1200.92 450.00 1210.34 448.50 1219.76 448.50 C1229.18 448.50 1238.60 448.73 1248.02 449.00 C1257.44 449.27 1266.86 449.77 1276.28 450.10 C1285.70 450.43 1295.12 451.00 1304.54 451.00 C1313.96 451.00 1323.38 451.00 1332.80 451.00" stroke="#55d3e2" stroke-width="2.2" stroke-linecap="round"/><circle cx="485.0" cy="444.6" r="3.4" fill="#55d3e2" stroke="#fff" stroke-width="1.8"/><circle cx="513.3" cy="444.0" r="3.4" fill="#55d3e2" stroke="#fff" stroke-width="1.8"/><circle cx="541.5" cy="442.2" r="3.4" fill="#55d3e2" stroke="#fff" stroke-width="1.8"/><circle cx="569.8" cy="448.2" r="3.4" fill="#55d3e2" stroke="#fff" stroke-width="1.8"/><circle cx="598.0" cy="444.0" r="3.4" fill="#55d3e2" stroke="#fff" stroke-width="1.8"/><circle cx="626.3" cy="444.0" r="3.4" fill="#55d3e2" stroke="#fff" stroke-width="1.8"/><circle cx="654.6" cy="449.3" r="3.4" fill="#55d3e2" stroke="#fff" stroke-width="1.8"/><circle cx="682.8" cy="450.2" r="3.4" fill="#55d3e2" stroke="#fff" stroke-width="1.8"/><circle cx="711.1" cy="445.6" r="3.4" fill="#55d3e2" stroke="#fff" stroke-width="1.8"/><circle cx="739.3" cy="446.0" r="3.4" fill="#55d3e2" stroke="#fff" stroke-width="1.8"/><circle cx="767.6" cy="445.5" r="3.4" fill="#55d3e2" stroke="#fff" stroke-width="1.8"/><circle cx="795.9" cy="445.5" r="3.4" fill="#55d3e2" stroke="#fff" stroke-width="1.8"/><circle cx="824.1" cy="444.8" r="3.4" fill="#55d3e2" stroke="#fff" stroke-width="1.8"/><circle cx="852.4" cy="435.6" r="3.4" fill="#55d3e2" stroke="#fff" stroke-width="1.8"/><circle cx="880.6" cy="447.6" r="3.4" fill="#55d3e2" stroke="#fff" stroke-width="1.8"/><circle cx="908.9" cy="448.4" r="3.4" fill="#55d3e2" stroke="#fff" stroke-width="1.8"/><circle cx="937.2" cy="447.4" r="3.4" fill="#55d3e2" stroke="#fff" stroke-width="1.8"/><circle cx="965.4" cy="445.6" r="3.4" fill="#55d3e2" stroke="#fff" stroke-width="1.8"/><circle cx="993.7" cy="445.6" r="3.4" fill="#55d3e2" stroke="#fff" stroke-width="1.8"/><circle cx="1021.9" cy="447.6" r="3.4" fill="#55d3e2" stroke="#fff" stroke-width="1.8"/><circle cx="1050.2" cy="448.4" r="3.4" fill="#55d3e2" stroke="#fff" stroke-width="1.8"/><circle cx="1078.5" cy="447.0" r="3.4" fill="#55d3e2" stroke="#fff" stroke-width="1.8"/><circle cx="1106.7" cy="443.2" r="3.4" fill="#55d3e2" stroke="#fff" stroke-width="1.8"/><circle cx="1135.0" cy="448.0" r="3.4" fill="#55d3e2" stroke="#fff" stroke-width="1.8"/><circle cx="1163.2" cy="442.5" r="3.4" fill="#55d3e2" stroke="#fff" stroke-width="1.8"/><circle cx="1191.5" cy="450.0" r="3.4" fill="#55d3e2" stroke="#fff" stroke-width="1.8"/><circle cx="1219.8" cy="448.5" r="3.4" fill="#55d3e2" stroke="#fff" stroke-width="1.8"/><circle cx="1248.0" cy="449.0" r="3.4" fill="#55d3e2" stroke="#fff" stroke-width="1.8"/><circle cx="1276.3" cy="450.1" r="3.4" fill="#55d3e2" stroke="#fff" stroke-width="1.8"/><circle cx="1304.5" cy="451.0" r="3.4" fill="#55d3e2" stroke="#fff" stroke-width="1.8"/><circle cx="1332.8" cy="451.0" r="3.4" fill="#55d3e2" stroke="#fff" stroke-width="1.8"/><path d="M485.00 432.60 C494.42 438.30 503.84 444.00 513.26 444.00 C522.68 444.00 532.10 443.00 541.52 442.20 C550.94 441.40 560.36 439.20 569.78 439.20 C579.20 439.20 588.62 444.00 598.04 444.00 C607.46 444.00 616.88 444.00 626.30 444.00 C635.72 444.00 645.14 448.70 654.56 449.30 C663.98 449.90 673.40 450.20 682.82 450.20 C692.24 450.20 701.66 446.33 711.08 445.60 C720.50 444.87 729.92 444.85 739.34 444.50 C748.76 444.15 758.18 443.50 767.60 443.50 C777.02 443.50 786.44 443.50 795.86 443.50 C805.28 443.50 814.70 443.93 824.12 444.80 C833.54 445.67 842.96 450.00 852.38 450.00 C861.80 450.00 871.22 447.60 880.64 447.60 C890.06 447.60 899.48 448.40 908.90 448.40 C918.32 448.40 927.74 433.20 937.16 433.20 C946.58 433.20 956.00 445.60 965.42 445.60 C974.84 445.60 984.26 445.60 993.68 445.60 C1003.10 445.60 1012.52 447.13 1021.94 447.60 C1031.36 448.07 1040.78 448.40 1050.20 448.40 C1059.62 448.40 1069.04 442.70 1078.46 442.70 C1087.88 442.70 1097.30 442.90 1106.72 443.20 C1116.14 443.50 1125.56 444.12 1134.98 444.50 C1144.40 444.88 1153.82 445.50 1163.24 445.50 C1172.66 445.50 1182.08 445.50 1191.50 445.50 C1200.92 445.50 1210.34 455.00 1219.76 455.00 C1229.18 455.00 1238.60 454.32 1248.02 453.50 C1257.44 452.68 1266.86 450.10 1276.28 450.10 C1285.70 450.10 1295.12 451.00 1304.54 451.00 C1313.96 451.00 1323.38 451.00 1332.80 451.00" stroke="#26a27a" stroke-width="2.2" stroke-linecap="round"/><circle cx="485.0" cy="432.6" r="3.4" fill="#26a27a" stroke="#fff" stroke-width="1.8"/><circle cx="513.3" cy="444.0" r="3.4" fill="#26a27a" stroke="#fff" stroke-width="1.8"/><circle cx="541.5" cy="442.2" r="3.4" fill="#26a27a" stroke="#fff" stroke-width="1.8"/><circle cx="569.8" cy="439.2" r="3.4" fill="#26a27a" stroke="#fff" stroke-width="1.8"/><circle cx="598.0" cy="444.0" r="3.4" fill="#26a27a" stroke="#fff" stroke-width="1.8"/><circle cx="626.3" cy="444.0" r="3.4" fill="#26a27a" stroke="#fff" stroke-width="1.8"/><circle cx="654.6" cy="449.3" r="3.4" fill="#26a27a" stroke="#fff" stroke-width="1.8"/><circle cx="682.8" cy="450.2" r="3.4" fill="#26a27a" stroke="#fff" stroke-width="1.8"/><circle cx="711.1" cy="445.6" r="3.4" fill="#26a27a" stroke="#fff" stroke-width="1.8"/><circle cx="739.3" cy="444.5" r="3.4" fill="#26a27a" stroke="#fff" stroke-width="1.8"/><circle cx="767.6" cy="443.5" r="3.4" fill="#26a27a" stroke="#fff" stroke-width="1.8"/><circle cx="795.9" cy="443.5" r="3.4" fill="#26a27a" stroke="#fff" stroke-width="1.8"/><circle cx="824.1" cy="444.8" r="3.4" fill="#26a27a" stroke="#fff" stroke-width="1.8"/><circle cx="852.4" cy="450.0" r="3.4" fill="#26a27a" stroke="#fff" stroke-width="1.8"/><circle cx="880.6" cy="447.6" r="3.4" fill="#26a27a" stroke="#fff" stroke-width="1.8"/><circle cx="908.9" cy="448.4" r="3.4" fill="#26a27a" stroke="#fff" stroke-width="1.8"/><circle cx="937.2" cy="433.2" r="3.4" fill="#26a27a" stroke="#fff" stroke-width="1.8"/><circle cx="965.4" cy="445.6" r="3.4" fill="#26a27a" stroke="#fff" stroke-width="1.8"/><circle cx="993.7" cy="445.6" r="3.4" fill="#26a27a" stroke="#fff" stroke-width="1.8"/><circle cx="1021.9" cy="447.6" r="3.4" fill="#26a27a" stroke="#fff" stroke-width="1.8"/><circle cx="1050.2" cy="448.4" r="3.4" fill="#26a27a" stroke="#fff" stroke-width="1.8"/><circle cx="1078.5" cy="442.7" r="3.4" fill="#26a27a" stroke="#fff" stroke-width="1.8"/><circle cx="1106.7" cy="443.2" r="3.4" fill="#26a27a" stroke="#fff" stroke-width="1.8"/><circle cx="1135.0" cy="444.5" r="3.4" fill="#26a27a" stroke="#fff" stroke-width="1.8"/><circle cx="1163.2" cy="445.5" r="3.4" fill="#26a27a" stroke="#fff" stroke-width="1.8"/><circle cx="1191.5" cy="445.5" r="3.4" fill="#26a27a" stroke="#fff" stroke-width="1.8"/><circle cx="1219.8" cy="455.0" r="3.4" fill="#26a27a" stroke="#fff" stroke-width="1.8"/><circle cx="1248.0" cy="453.5" r="3.4" fill="#26a27a" stroke="#fff" stroke-width="1.8"/><circle cx="1276.3" cy="450.1" r="3.4" fill="#26a27a" stroke="#fff" stroke-width="1.8"/><circle cx="1304.5" cy="451.0" r="3.4" fill="#26a27a" stroke="#fff" stroke-width="1.8"/><circle cx="1332.8" cy="451.0" r="3.4" fill="#26a27a" stroke="#fff" stroke-width="1.8"/><path d="M485.00 438.60 C494.42 441.30 503.84 444.00 513.26 444.00 C522.68 444.00 532.10 442.20 541.52 442.20 C550.94 442.20 560.36 444.00 569.78 444.00 C579.20 444.00 588.62 444.00 598.04 444.00 C607.46 444.00 616.88 444.00 626.30 444.00 C635.72 444.00 645.14 448.70 654.56 449.30 C663.98 449.90 673.40 450.20 682.82 450.20 C692.24 450.20 701.66 446.00 711.08 445.60 C720.50 445.20 729.92 445.27 739.34 445.00 C748.76 444.73 758.18 444.00 767.60 444.00 C777.02 444.00 786.44 444.00 795.86 444.00 C805.28 444.00 814.70 444.80 824.12 444.80 C833.54 444.80 842.96 442.80 852.38 442.80 C861.80 442.80 871.22 447.07 880.64 447.60 C890.06 448.13 899.48 448.40 908.90 448.40 C918.32 448.40 927.74 440.60 937.16 440.60 C946.58 440.60 956.00 445.60 965.42 445.60 C974.84 445.60 984.26 445.60 993.68 445.60 C1003.10 445.60 1012.52 447.13 1021.94 447.60 C1031.36 448.07 1040.78 448.40 1050.20 448.40 C1059.62 448.40 1069.04 446.47 1078.46 445.60 C1087.88 444.73 1097.30 443.20 1106.72 443.20 C1116.14 443.20 1125.56 446.40 1134.98 446.40 C1144.40 446.40 1153.82 445.00 1163.24 445.00 C1172.66 445.00 1182.08 447.27 1191.50 448.40 C1200.92 449.53 1210.34 451.80 1219.76 451.80 C1229.18 451.80 1238.60 451.28 1248.02 451.00 C1257.44 450.72 1266.86 450.10 1276.28 450.10 C1285.70 450.10 1295.12 451.00 1304.54 451.00 C1313.96 451.00 1323.38 451.00 1332.80 451.00" stroke="#213a44" stroke-width="2.2" stroke-linecap="round"/><circle cx="485.0" cy="438.6" r="3.4" fill="#27313e" stroke="#fff" stroke-width="1.8"/><circle cx="513.3" cy="444.0" r="3.4" fill="#27313e" stroke="#fff" stroke-width="1.8"/><circle cx="541.5" cy="442.2" r="3.4" fill="#27313e" stroke="#fff" stroke-width="1.8"/><circle cx="569.8" cy="444.0" r="3.4" fill="#27313e" stroke="#fff" stroke-width="1.8"/><circle cx="598.0" cy="444.0" r="3.4" fill="#27313e" stroke="#fff" stroke-width="1.8"/><circle cx="626.3" cy="444.0" r="3.4" fill="#27313e" stroke="#fff" stroke-width="1.8"/><circle cx="654.6" cy="449.3" r="3.4" fill="#27313e" stroke="#fff" stroke-width="1.8"/><circle cx="682.8" cy="450.2" r="3.4" fill="#27313e" stroke="#fff" stroke-width="1.8"/><circle cx="711.1" cy="445.6" r="3.4" fill="#27313e" stroke="#fff" stroke-width="1.8"/><circle cx="739.3" cy="445.0" r="3.4" fill="#27313e" stroke="#fff" stroke-width="1.8"/><circle cx="767.6" cy="444.0" r="3.4" fill="#27313e" stroke="#fff" stroke-width="1.8"/><circle cx="795.9" cy="444.0" r="3.4" fill="#27313e" stroke="#fff" stroke-width="1.8"/><circle cx="824.1" cy="444.8" r="3.4" fill="#27313e" stroke="#fff" stroke-width="1.8"/><circle cx="852.4" cy="442.8" r="3.4" fill="#27313e" stroke="#fff" stroke-width="1.8"/><circle cx="880.6" cy="447.6" r="3.4" fill="#27313e" stroke="#fff" stroke-width="1.8"/><circle cx="908.9" cy="448.4" r="3.4" fill="#27313e" stroke="#fff" stroke-width="1.8"/><circle cx="937.2" cy="440.6" r="3.4" fill="#27313e" stroke="#fff" stroke-width="1.8"/><circle cx="965.4" cy="445.6" r="3.4" fill="#27313e" stroke="#fff" stroke-width="1.8"/><circle cx="993.7" cy="445.6" r="3.4" fill="#27313e" stroke="#fff" stroke-width="1.8"/><circle cx="1021.9" cy="447.6" r="3.4" fill="#27313e" stroke="#fff" stroke-width="1.8"/><circle cx="1050.2" cy="448.4" r="3.4" fill="#27313e" stroke="#fff" stroke-width="1.8"/><circle cx="1078.5" cy="445.6" r="3.4" fill="#27313e" stroke="#fff" stroke-width="1.8"/><circle cx="1106.7" cy="443.2" r="3.4" fill="#27313e" stroke="#fff" stroke-width="1.8"/><circle cx="1135.0" cy="446.4" r="3.4" fill="#27313e" stroke="#fff" stroke-width="1.8"/><circle cx="1163.2" cy="445.0" r="3.4" fill="#27313e" stroke="#fff" stroke-width="1.8"/><circle cx="1191.5" cy="448.4" r="3.4" fill="#27313e" stroke="#fff" stroke-width="1.8"/><circle cx="1219.8" cy="451.8" r="3.4" fill="#27313e" stroke="#fff" stroke-width="1.8"/><circle cx="1248.0" cy="451.0" r="3.4" fill="#27313e" stroke="#fff" stroke-width="1.8"/><circle cx="1276.3" cy="450.1" r="3.4" fill="#27313e" stroke="#fff" stroke-width="1.8"/><circle cx="1304.5" cy="451.0" r="3.4" fill="#27313e" stroke="#fff" stroke-width="1.8"/><circle cx="1332.8" cy="451.0" r="3.4" fill="#27313e" stroke="#fff" stroke-width="1.8"/><path d="M485.00 349.20 C494.42 353.60 503.84 358.00 513.26 358.00 C522.68 358.00 532.10 355.30 541.52 355.30 C550.94 355.30 560.36 358.80 569.78 358.80 C579.20 358.80 588.62 358.80 598.04 358.80 C607.46 358.80 616.88 358.00 626.30 358.00 C635.72 358.00 645.14 367.33 654.56 368.40 C663.98 369.47 673.40 370.00 682.82 370.00 C692.24 370.00 701.66 364.90 711.08 363.30 C720.50 361.70 729.92 360.93 739.34 360.40 C748.76 359.87 758.18 359.87 767.60 359.60 C777.02 359.33 786.44 358.80 795.86 358.80 C805.28 358.80 814.70 359.60 824.12 359.60 C833.54 359.60 842.96 355.90 852.38 355.90 C861.80 355.90 871.22 364.93 880.64 366.00 C890.06 367.07 899.48 367.60 908.90 367.60 C918.32 367.60 927.74 351.60 937.16 351.60 C946.58 351.60 956.00 361.50 965.42 361.50 C974.84 361.50 984.26 361.50 993.68 361.50 C1003.10 361.50 1012.52 364.98 1021.94 366.00 C1031.36 367.02 1040.78 367.60 1050.20 367.60 C1059.62 367.60 1069.04 364.03 1078.46 362.30 C1087.88 360.57 1097.30 357.20 1106.72 357.20 C1116.14 357.20 1125.56 363.30 1134.98 363.30 C1144.40 363.30 1153.82 359.60 1163.24 359.60 C1172.66 359.60 1182.08 364.82 1191.50 367.30 C1200.92 369.78 1210.34 374.50 1219.76 374.50 C1229.18 374.50 1238.60 372.65 1248.02 371.90 C1257.44 371.15 1266.86 370.00 1276.28 370.00 C1285.70 370.00 1295.12 372.90 1304.54 372.90 C1313.96 372.90 1323.38 372.90 1332.80 372.90" stroke="#4a4d2b" stroke-width="2.2" stroke-linecap="round"/><circle cx="485.0" cy="349.2" r="3.4" fill="#4a4d2b" stroke="#fff" stroke-width="1.8"/><circle cx="513.3" cy="358.0" r="3.4" fill="#4a4d2b" stroke="#fff" stroke-width="1.8"/><circle cx="541.5" cy="355.3" r="3.4" fill="#4a4d2b" stroke="#fff" stroke-width="1.8"/><circle cx="569.8" cy="358.8" r="3.4" fill="#4a4d2b" stroke="#fff" stroke-width="1.8"/><circle cx="598.0" cy="358.8" r="3.4" fill="#4a4d2b" stroke="#fff" stroke-width="1.8"/><circle cx="626.3" cy="358.0" r="3.4" fill="#4a4d2b" stroke="#fff" stroke-width="1.8"/><circle cx="654.6" cy="368.4" r="3.4" fill="#4a4d2b" stroke="#fff" stroke-width="1.8"/><circle cx="682.8" cy="370.0" r="3.4" fill="#4a4d2b" stroke="#fff" stroke-width="1.8"/><circle cx="711.1" cy="363.3" r="3.4" fill="#4a4d2b" stroke="#fff" stroke-width="1.8"/><circle cx="739.3" cy="360.4" r="3.4" fill="#4a4d2b" stroke="#fff" stroke-width="1.8"/><circle cx="767.6" cy="359.6" r="3.4" fill="#4a4d2b" stroke="#fff" stroke-width="1.8"/><circle cx="795.9" cy="358.8" r="3.4" fill="#4a4d2b" stroke="#fff" stroke-width="1.8"/><circle cx="824.1" cy="359.6" r="3.4" fill="#4a4d2b" stroke="#fff" stroke-width="1.8"/><circle cx="852.4" cy="355.9" r="3.4" fill="#4a4d2b" stroke="#fff" stroke-width="1.8"/><circle cx="880.6" cy="366.0" r="3.4" fill="#4a4d2b" stroke="#fff" stroke-width="1.8"/><circle cx="908.9" cy="367.6" r="3.4" fill="#4a4d2b" stroke="#fff" stroke-width="1.8"/><circle cx="937.2" cy="351.6" r="3.4" fill="#4a4d2b" stroke="#fff" stroke-width="1.8"/><circle cx="965.4" cy="361.5" r="3.4" fill="#4a4d2b" stroke="#fff" stroke-width="1.8"/><circle cx="993.7" cy="361.5" r="3.4" fill="#4a4d2b" stroke="#fff" stroke-width="1.8"/><circle cx="1021.9" cy="366.0" r="3.4" fill="#4a4d2b" stroke="#fff" stroke-width="1.8"/><circle cx="1050.2" cy="367.6" r="3.4" fill="#4a4d2b" stroke="#fff" stroke-width="1.8"/><circle cx="1078.5" cy="362.3" r="3.4" fill="#4a4d2b" stroke="#fff" stroke-width="1.8"/><circle cx="1106.7" cy="357.2" r="3.4" fill="#4a4d2b" stroke="#fff" stroke-width="1.8"/><circle cx="1135.0" cy="363.3" r="3.4" fill="#4a4d2b" stroke="#fff" stroke-width="1.8"/><circle cx="1163.2" cy="359.6" r="3.4" fill="#4a4d2b" stroke="#fff" stroke-width="1.8"/><circle cx="1191.5" cy="367.3" r="3.4" fill="#4a4d2b" stroke="#fff" stroke-width="1.8"/><circle cx="1219.8" cy="374.5" r="3.4" fill="#4a4d2b" stroke="#fff" stroke-width="1.8"/><circle cx="1248.0" cy="371.9" r="3.4" fill="#4a4d2b" stroke="#fff" stroke-width="1.8"/><circle cx="1276.3" cy="370.0" r="3.4" fill="#4a4d2b" stroke="#fff" stroke-width="1.8"/><circle cx="1304.5" cy="372.9" r="3.4" fill="#4a4d2b" stroke="#fff" stroke-width="1.8"/><circle cx="1332.8" cy="372.9" r="3.4" fill="#4a4d2b" stroke="#fff" stroke-width="1.8"/></svg>
<div style="position:absolute;left:429px;top:534.5px;width:5px;height:5px;border-radius:50%;background:#55d3e2;"></div>
<svg style="position:absolute;left:439.5px;top:530px;overflow:visible" width="14" height="14" viewBox="0 0 14 14" fill="none"><path d="M13.3 7.2 c0 -0.5 0 -1 -0.1 -1.4 H7 v2.7 h3.6 a3 3 0 0 1 -1.3 2 v1.7 h2.1 c1.2 -1.1 1.9 -2.8 1.9 -5 Z" fill="#4285F4"/><path d="M7 13.5 c1.8 0 3.3 -0.6 4.4 -1.6 l-2.1 -1.7 c-0.6 0.4 -1.4 0.7 -2.3 0.7 c-1.7 0 -3.2 -1.2 -3.7 -2.8 H1.1 v1.7 A6.5 6.5 0 0 0 7 13.5 Z" fill="#34A853"/><path d="M3.3 8.1 a4 4 0 0 1 0 -2.5 V3.9 H1.1 a6.5 6.5 0 0 0 0 5.9 Z" fill="#FBBC05"/><path d="M7 2.6 c1 0 1.8 0.3 2.5 1 l1.9 -1.9 A6.5 6.5 0 0 0 1.1 3.9 l2.2 1.7 C3.8 4 5.3 2.6 7 2.6 Z" fill="#EA4335"/></svg>
<svg style="position:absolute;left:459px;top:530px;overflow:visible" width="14" height="14" viewBox="0 0 14 14" fill="none"><rect x="0" y="0" width="14" height="14" rx="1" fill="#f3d9dc"/><rect x="0" y="0" width="14" height="1.1" fill="#de5a68"/><rect x="0" y="2" width="14" height="1.1" fill="#de5a68"/><rect x="0" y="4" width="14" height="1.1" fill="#de5a68"/><rect x="0" y="6" width="14" height="1.1" fill="#de5a68"/><rect x="0" y="8" width="14" height="1.1" fill="#de5a68"/><rect x="0" y="10" width="14" height="1.1" fill="#de5a68"/><rect x="0" y="12" width="14" height="1.1" fill="#de5a68"/><rect x="0" y="7.5" width="14" height="6.5" fill="#eb8f99" opacity="0.55"/><rect x="0" y="0" width="5" height="6.5" fill="#5b5f95"/></svg>
<div style="position:absolute;left:478.30px;top:532.10px;font-size:12px;line-height:12px;font-weight:400;color:#6e7681;white-space:nowrap;letter-spacing:0px;transform:scaleX(0.9600);transform-origin:0 0;">USA</div>
<div style="position:absolute;left:517px;top:534.5px;width:5px;height:5px;border-radius:50%;background:#26a27a;"></div>
<svg style="position:absolute;left:527.5px;top:530px;overflow:visible" width="14" height="14" viewBox="0 0 14 14" fill="none"><path d="M13.3 7.2 c0 -0.5 0 -1 -0.1 -1.4 H7 v2.7 h3.6 a3 3 0 0 1 -1.3 2 v1.7 h2.1 c1.2 -1.1 1.9 -2.8 1.9 -5 Z" fill="#4285F4"/><path d="M7 13.5 c1.8 0 3.3 -0.6 4.4 -1.6 l-2.1 -1.7 c-0.6 0.4 -1.4 0.7 -2.3 0.7 c-1.7 0 -3.2 -1.2 -3.7 -2.8 H1.1 v1.7 A6.5 6.5 0 0 0 7 13.5 Z" fill="#34A853"/><path d="M3.3 8.1 a4 4 0 0 1 0 -2.5 V3.9 H1.1 a6.5 6.5 0 0 0 0 5.9 Z" fill="#FBBC05"/><path d="M7 2.6 c1 0 1.8 0.3 2.5 1 l1.9 -1.9 A6.5 6.5 0 0 0 1.1 3.9 l2.2 1.7 C3.8 4 5.3 2.6 7 2.6 Z" fill="#EA4335"/><rect x="0" y="7.5" width="5" height="6.5" rx="1" fill="#3a3f47"/><rect x="1.2" y="8.8" width="2.6" height="3.6" fill="#fff"/></svg>
<svg style="position:absolute;left:547px;top:530px;overflow:visible" width="14" height="14" viewBox="0 0 14 14" fill="none"><rect x="0" y="0" width="14" height="14" rx="1" fill="#f3d9dc"/><rect x="0" y="0" width="14" height="1.1" fill="#de5a68"/><rect x="0" y="2" width="14" height="1.1" fill="#de5a68"/><rect x="0" y="4" width="14" height="1.1" fill="#de5a68"/><rect x="0" y="6" width="14" height="1.1" fill="#de5a68"/><rect x="0" y="8" width="14" height="1.1" fill="#de5a68"/><rect x="0" y="10" width="14" height="1.1" fill="#de5a68"/><rect x="0" y="12" width="14" height="1.1" fill="#de5a68"/><rect x="0" y="7.5" width="14" height="6.5" fill="#eb8f99" opacity="0.55"/><rect x="0" y="0" width="5" height="6.5" fill="#5b5f95"/></svg>
<div style="position:absolute;left:566.30px;top:532.10px;font-size:12px;line-height:12px;font-weight:400;color:#6e7681;white-space:nowrap;letter-spacing:0px;transform:scaleX(0.9600);transform-origin:0 0;">USA</div>
<div style="position:absolute;left:604.8px;top:534.8px;width:5px;height:5px;border-radius:50%;background:#2c3646;"></div>
<svg style="position:absolute;left:616px;top:532px;overflow:visible" width="17" height="11" viewBox="0 0 17 11" fill="none"><path d="M0.4 5.5 L3.6 9.5 M4.6 5.5 L7.5 8.8 L15.9 0.7 M7.6 5.1 L11.5 0.9" stroke="#1e232a" stroke-width="1.5" fill="none"/></svg>
<div style="position:absolute;left:638.90px;top:532.10px;font-size:12px;line-height:12px;font-weight:400;color:#6e7681;white-space:nowrap;letter-spacing:0px;transform:scaleX(1.0109);transform-origin:0 0;">Average for all</div>
<div style="position:absolute;left:731px;top:534.5px;width:5px;height:5px;border-radius:50%;background:#4a4d2b;"></div>
<div style="position:absolute;left:743.40px;top:532.10px;font-size:12px;line-height:12px;font-weight:400;color:#6e7681;white-space:nowrap;letter-spacing:0px;transform:scaleX(1.0512);transform-origin:0 0;">Total for all</div>
<div style="position:absolute;left:399px;top:565.5px;width:972.5px;height:1px;background:#f2f3f5;"></div>
<div style="position:absolute;left:399px;top:566.5px;width:972.5px;height:25.5px;background:linear-gradient(#fff,#f7f8fa);border-radius:0 0 4px 4px;"></div>
<svg style="position:absolute;left:880px;top:576px;overflow:visible" width="11" height="7" viewBox="0 0 11 7" fill="none"><path d="M0.8 5.8 L5.5 1.1 L10.2 5.8" stroke="#8a9099" stroke-width="1.6" fill="none"/></svg>
<div style="position:absolute;left:381px;top:592px;width:1001px;height:8px;background:#eaebef;"></div>
<div style="position:absolute;left:1372px;top:0px;width:10px;height:600px;background:#efeff4;"></div>
<div style="position:absolute;left:1316px;top:511px;width:52px;height:52px;border-radius:50%;background:#1a3ef2;box-shadow:0 2px 6px rgba(20,40,120,0.25);"></div>
<svg style="position:absolute;left:1328px;top:523.5px;overflow:visible" width="28" height="28" viewBox="0 0 28 28" fill="none"><path d="M3 4.7 Q12 3.8 21 4.7 Q23.8 5 23.5 9 Q23.8 13.5 23.3 18 Q23 21.8 20 22 L14 22 L11.7 26.3 L8.7 22 L3.5 22 Q0.7 21.8 0.7 18 Q0.2 13.5 0.7 9 Q0.7 5 3 4.7 Z" fill="#fff"/><path d="M4.7 2.6 Q14 0.2 23 1 Q26.2 1.6 25.9 5 L25.7 17.3 Q24.6 10 24.2 6.2 Q24 3.5 21 3.3 Q12 2.8 4.7 2.6 Z" fill="#fff"/></svg>
<div style="position:absolute;left:370.5px;top:2px;width:21px;height:21px;border-radius:50%;background:#1f2833;box-sizing:border-box;border:1px solid #3a4552;"></div>
<svg style="position:absolute;left:377.5px;top:8px;overflow:visible" width="6" height="9" viewBox="0 0 6 9" fill="none"><path d="M4.8 1 L1.2 4.5 L4.8 8" stroke="#e8ebef" stroke-width="1.4" fill="none"/></svg>
</div></body></html>
